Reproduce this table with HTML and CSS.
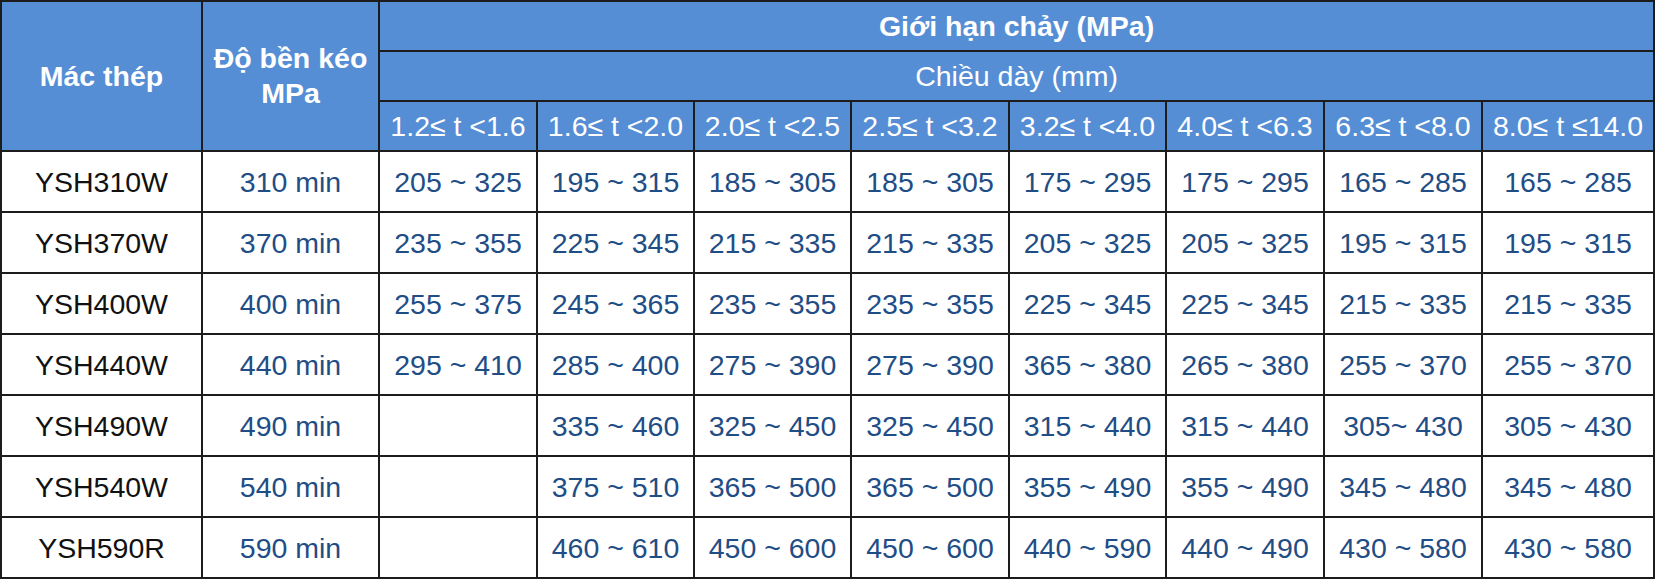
FILE: index.html
```html
<!DOCTYPE html>
<html lang="vi">
<head>
<meta charset="utf-8">
<title>Bảng cơ tính thép</title>
<link rel="stylesheet" href="styles.css">
</head>
<body>
<table class="spec">
  <colgroup>
    <col class="c-grade">
    <col class="c-tensile">
    <col class="c-t1">
    <col class="c-t2">
    <col class="c-t3">
    <col class="c-t4">
    <col class="c-t5">
    <col class="c-t6">
    <col class="c-t7">
    <col class="c-t8">
  </colgroup>
  <thead>
    <tr class="hrow">
      <th rowspan="3" class="bold">Mác thép</th>
      <th rowspan="3" class="bold">Độ bền kéo<br>MPa</th>
      <th colspan="8" class="bold">Giới hạn chảy (MPa)</th>
    </tr>
    <tr class="hrow">
      <th colspan="8">Chiều dày (mm)</th>
    </tr>
    <tr class="hrow">
      <th>1.2≤ t &lt;1.6</th>
      <th>1.6≤ t &lt;2.0</th>
      <th>2.0≤ t &lt;2.5</th>
      <th>2.5≤ t &lt;3.2</th>
      <th>3.2≤ t &lt;4.0</th>
      <th>4.0≤ t &lt;6.3</th>
      <th>6.3≤ t &lt;8.0</th>
      <th>8.0≤ t ≤14.0</th>
    </tr>
  </thead>
  <tbody>
    <tr><td class="grade">YSH310W</td><td>310 min</td><td>205 ~ 325</td><td>195 ~ 315</td><td>185 ~ 305</td><td>185 ~ 305</td><td>175 ~ 295</td><td>175 ~ 295</td><td>165 ~ 285</td><td>165 ~ 285</td></tr>
    <tr><td class="grade">YSH370W</td><td>370 min</td><td>235 ~ 355</td><td>225 ~ 345</td><td>215 ~ 335</td><td>215 ~ 335</td><td>205 ~ 325</td><td>205 ~ 325</td><td>195 ~ 315</td><td>195 ~ 315</td></tr>
    <tr><td class="grade">YSH400W</td><td>400 min</td><td>255 ~ 375</td><td>245 ~ 365</td><td>235 ~ 355</td><td>235 ~ 355</td><td>225 ~ 345</td><td>225 ~ 345</td><td>215 ~ 335</td><td>215 ~ 335</td></tr>
    <tr><td class="grade">YSH440W</td><td>440 min</td><td>295 ~ 410</td><td>285 ~ 400</td><td>275 ~ 390</td><td>275 ~ 390</td><td>365 ~ 380</td><td>265 ~ 380</td><td>255 ~ 370</td><td>255 ~ 370</td></tr>
    <tr><td class="grade">YSH490W</td><td>490 min</td><td></td><td>335 ~ 460</td><td>325 ~ 450</td><td>325 ~ 450</td><td>315 ~ 440</td><td>315 ~ 440</td><td>305~ 430</td><td>305 ~ 430</td></tr>
    <tr><td class="grade">YSH540W</td><td>540 min</td><td></td><td>375 ~ 510</td><td>365 ~ 500</td><td>365 ~ 500</td><td>355 ~ 490</td><td>355 ~ 490</td><td>345 ~ 480</td><td>345 ~ 480</td></tr>
    <tr><td class="grade">YSH590R</td><td>590 min</td><td></td><td>460 ~ 610</td><td>450 ~ 600</td><td>450 ~ 600</td><td>440 ~ 590</td><td>440 ~ 490</td><td>430 ~ 580</td><td>430 ~ 580</td></tr>
  </tbody>
</table>
</body>
</html>
```
FILE: styles.css
```css
html, body {
  margin: 0;
  padding: 0;
  background: #ffffff;
}

.spec {
  border-collapse: collapse;
  table-layout: fixed;
  width: 1655px;
  font-family: "Liberation Sans", Arial, sans-serif;
  font-size: 28.5px;
}

.c-grade { width: 201px; }
.c-tensile { width: 177px; }
.c-t1 { width: 158px; }
.c-t2 { width: 157px; }
.c-t3 { width: 157px; }
.c-t4 { width: 158px; }
.c-t5 { width: 157px; }
.c-t6 { width: 158px; }
.c-t7 { width: 158px; }
.c-t8 { width: 172px; }

.spec th,
.spec td {
  border: 2px solid #1c1c1c;
  padding: 0;
  text-align: center;
  vertical-align: middle;
  white-space: nowrap;
}

.spec th {
  background: #558ed5;
  color: #ffffff;
  font-weight: normal;
  line-height: 35px;
}

.spec th.bold {
  font-weight: bold;
}

.hrow {
  height: 50px;
}

.spec tbody tr {
  height: 61px;
}

.spec td {
  color: #1f4d85;
  line-height: 32px;
}

.spec td.grade {
  color: #111111;
}
```
